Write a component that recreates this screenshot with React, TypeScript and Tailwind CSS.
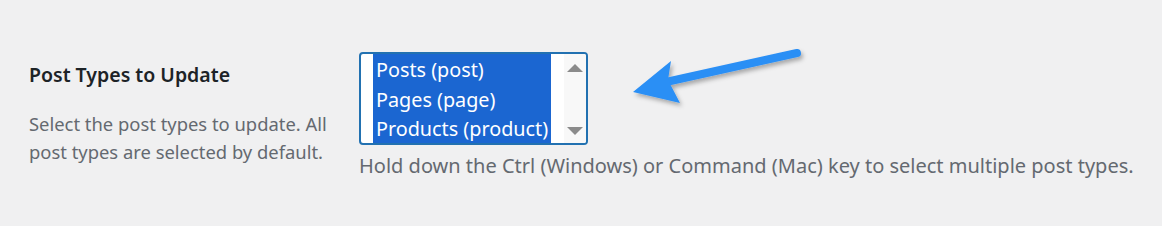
import React from "react";

const font = { fontFamily: '"Noto Sans", "Open Sans", sans-serif' };

export default function App() {
  return (
    <div className="relative h-[226px] w-[1162px] overflow-hidden bg-[#f0f0f1]" style={font}>
      <div className="flex pl-[29px] pt-[52px]">
        <div className="w-[330px] shrink-0">
          <div className="mt-[10px] whitespace-nowrap text-[19.5px] font-semibold leading-[26px] text-[#1d2327]">Post Types to Update</div>
          <p className="mt-[22px] w-[312px] text-[18.4px] leading-[28px] text-[#646970]">
            Select the post types to update. All post types are selected by default.
          </p>
        </div>
        <div>
          <div className="flex h-[93px] w-[229px] rounded-[4px] border-2 border-[#2271b1] bg-white pl-[12px]">
            <div className="flex w-[178px] flex-col bg-[#1b66d1] pt-[1px] text-[19.8px] leading-[29.5px] text-white">
              <div className="pl-[3px]">Posts (post)</div>
              <div className="pl-[3px]">Pages (page)</div>
              <div className="whitespace-nowrap pl-[3px]">Products (product)</div>
            </div>
            <div className="flex flex-1 justify-end">
              <div className="flex w-[22px] flex-col items-center justify-between rounded-r-[2px] bg-[#f8f8f8] pb-[8px] pt-[10px]">
                <div className="h-0 w-0 border-x-[8px] border-b-[8px] border-x-transparent border-b-[#8b8b8b]" />
                <div className="h-0 w-0 border-x-[8px] border-t-[8px] border-x-transparent border-t-[#8b8b8b]" />
              </div>
            </div>
          </div>
          <p className="mt-[7px] whitespace-nowrap text-[20px] leading-[28px] text-[#646970]">
            Hold down the Ctrl (Windows) or Command (Mac) key to select multiple post types.
          </p>
        </div>
      </div>
      <svg className="absolute left-[620px] top-[40px]" width="200" height="80" viewBox="620 40 200 80">
        <defs>
          <filter id="sh" x="-20%" y="-50%" width="140%" height="200%">
            <feDropShadow dx="2" dy="3" stdDeviation="2" floodColor="#000" floodOpacity="0.3" />
          </filter>
        </defs>
        <g filter="url(#sh)" fill="#2b8ff5" stroke="#2b8ff5">
          <line x1="797" y1="53" x2="666" y2="82" strokeWidth="8" strokeLinecap="round" />
          <polygon points="633,92 671,61 668,80 680,103" strokeWidth="0" />
        </g>
      </svg>
    </div>
  );
}
